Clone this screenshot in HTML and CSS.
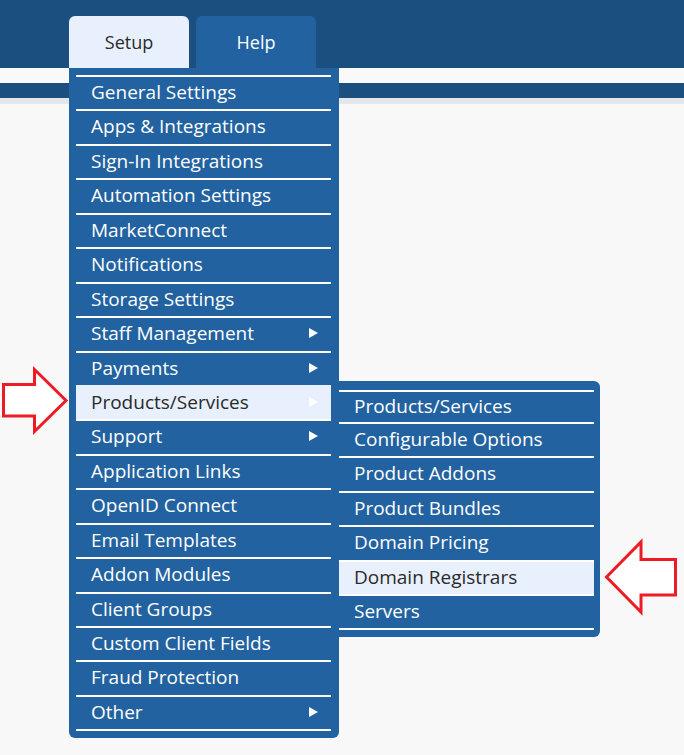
FILE: index.html
```html
<!DOCTYPE html>
<html>
<head>
<meta charset="utf-8">
<link rel="stylesheet" href="styles.css">
</head>
<body>
<div class="page">
  <header class="topbar">
    <nav class="tabs">
      <div class="tab tab-active">Setup</div>
      <div class="tab">Help</div>
    </nav>
  </header>
  <div class="strip-light"></div>
  <div class="strip-dark"></div>
  <div class="strip-gray"></div>

  <ul class="menu">
    <li class="item">General Settings</li>
    <li class="item">Apps &amp; Integrations</li>
    <li class="item">Sign-In Integrations</li>
    <li class="item">Automation Settings</li>
    <li class="item">MarketConnect</li>
    <li class="item">Notifications</li>
    <li class="item">Storage Settings</li>
    <li class="item has-sub">Staff Management</li>
    <li class="item has-sub">Payments</li>
    <li class="item has-sub active">Products/Services
      <ul class="submenu">
        <li class="sub-item first">Products/Services</li>
        <li class="sub-item">Configurable Options</li>
        <li class="sub-item">Product Addons</li>
        <li class="sub-item">Product Bundles</li>
        <li class="sub-item">Domain Pricing</li>
        <li class="sub-item active">Domain Registrars</li>
        <li class="sub-item last">Servers</li>
      </ul>
    </li>
    <li class="item has-sub">Support</li>
    <li class="item">Application Links</li>
    <li class="item">OpenID Connect</li>
    <li class="item">Email Templates</li>
    <li class="item">Addon Modules</li>
    <li class="item">Client Groups</li>
    <li class="item">Custom Client Fields</li>
    <li class="item">Fraud Protection</li>
    <li class="item has-sub last">Other</li>
  </ul>

  <svg class="arrow arrow-right" width="80" height="80" viewBox="0 360 80 80">
    <polygon points="3.5,384.5 34.5,384.5 34.5,369.5 66,400.5 34.5,431.5 34.5,416 3.5,416" fill="#ffffff" stroke="#ed1c24" stroke-width="3"/>
  </svg>
  <svg class="arrow arrow-left" width="84" height="85" viewBox="600 535 84 85">
    <polygon points="606.5,577 641,542 641,559.5 675.5,559.5 675.5,595 641,595 641,612" fill="#ffffff" stroke="#ed1c24" stroke-width="3"/>
  </svg>
</div>
</body>
</html>
```
FILE: styles.css
```css
html, body {
  margin: 0;
  padding: 0;
}
body {
  background: #f8f8f8;
  font-family: "Open Sans", "Noto Sans", sans-serif;
}
.page {
  position: relative;
  width: 684px;
  height: 755px;
  overflow: hidden;
  background: #f8f8f8;
}
.topbar {
  height: 68px;
  background: #1b4f80;
  display: flex;
  align-items: flex-end;
  padding-left: 69px;
  box-sizing: border-box;
}
.tabs {
  display: flex;
  gap: 7px;
}
.tab {
  width: 120px;
  height: 52px;
  border-radius: 6px 6px 0 0;
  background: #2262a0;
  color: #ffffff;
  font-size: 18px;
  display: flex;
  align-items: center;
  justify-content: center;
  padding-bottom: 1px;
  box-sizing: border-box;
}
.tab-active {
  background: #e8f0fd;
  color: #2a2a2a;
}
.strip-light {
  height: 15px;
  background: #f9f9f9;
}
.strip-dark {
  height: 15px;
  background: #1b4f80;
}
.strip-gray {
  height: 6px;
  background: #e3e7ea;
}

.menu {
  position: absolute;
  left: 69px;
  top: 68px;
  width: 270px;
  margin: 0;
  padding: 7px 8px 7px 7px;
  box-sizing: border-box;
  list-style: none;
  background: #2262a0;
  border-radius: 0 0 6px 6px;
}
.item {
  position: relative;
  height: 34.45px;
  box-sizing: border-box;
  border-top: 2px solid #ffffff;
  padding-left: 15px;
  color: #ffffff;
  font-size: 19px;
  line-height: 30px;
  white-space: nowrap;
}
.item.last {
  height: 36.45px;
  border-bottom: 2px solid #ffffff;
}
.item.active {
  background: #e8f0fd;
  border-top-color: #e8f0fd;
  color: #2a2a2a;
}
.has-sub::after {
  content: "";
  position: absolute;
  right: 13px;
  top: 10px;
  width: 0;
  height: 0;
  border-left: 9px solid #ffffff;
  border-top: 5.5px solid transparent;
  border-bottom: 5.5px solid transparent;
}

.submenu {
  position: absolute;
  left: 262px;
  top: -6px;
  width: 262px;
  margin: 0;
  padding: 9px 6px 7px 1px;
  box-sizing: border-box;
  list-style: none;
  background: #2262a0;
  border-radius: 0 6px 6px 0;
}
.sub-item {
  height: 34.4px;
  box-sizing: border-box;
  border-top: 2px solid #ffffff;
  padding-left: 15px;
  color: #ffffff;
  font-size: 19px;
  line-height: 31px;
  white-space: nowrap;
}
.sub-item.first {
  height: 32px;
  line-height: 29px;
}
.sub-item.last {
  height: 36.4px;
  border-bottom: 2px solid #ffffff;
}
.sub-item.active {
  background: #e8f0fd;
  color: #2a2a2a;
}

.arrow {
  position: absolute;
  display: block;
}
.arrow-right {
  left: 0;
  top: 360px;
}
.arrow-left {
  left: 600px;
  top: 535px;
}
```
